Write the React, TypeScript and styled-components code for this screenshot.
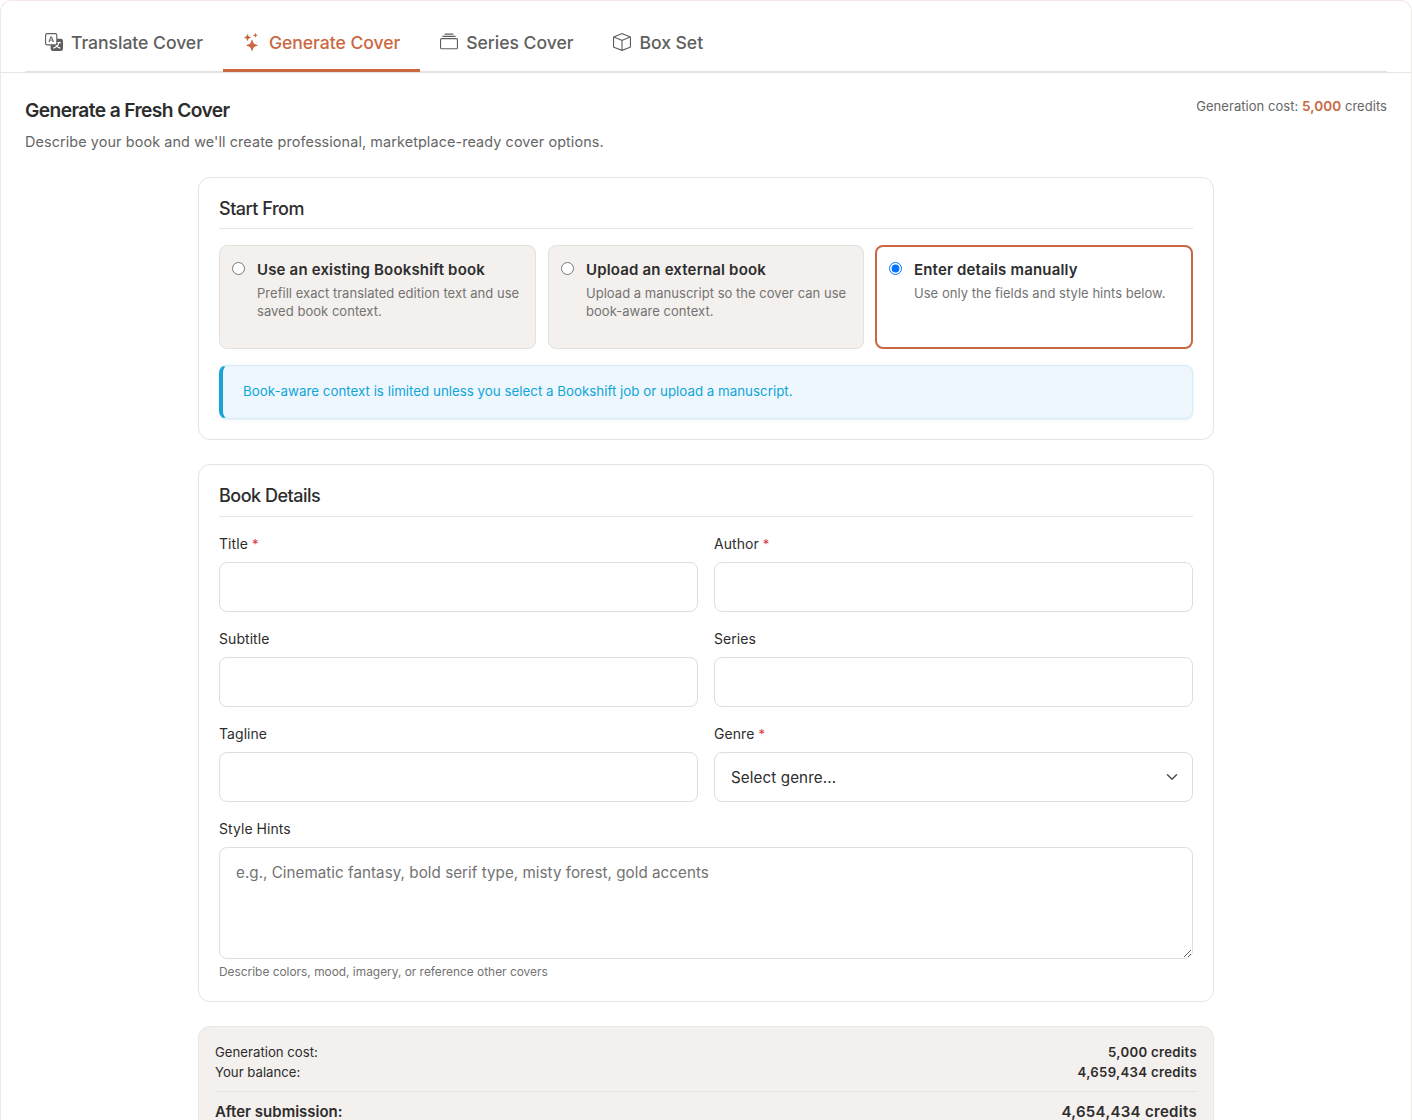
import React from 'react';
import styled, { createGlobalStyle } from 'styled-components';
import { BsTranslate, BsStars, BsCollection, BsBox } from 'react-icons/bs';

const GlobalStyle = createGlobalStyle`
  html, body {
    margin: 0;
    height: 1120px;
    overflow: hidden;
    background: #fff;
    font-family: Inter, "Liberation Sans", sans-serif;
    color: #2d2d2d;
  }
  * { box-sizing: border-box; }
`;

const Frame = styled.div`
  height: 1200px;
  border: 1px solid #eee9e7;
  border-top-color: #f8e6e6;
  border-radius: 12px;
  background: #fff;
`;

const Header = styled.div`
  height: 72px;
  padding: 0 24px;
  border-bottom: 1px solid #e8e6e3;
`;

const Tabs = styled.nav`
  display: flex;
  height: 72px;
  border-bottom: 2px solid #e2e2e0;
`;

const Tab = styled.a<{ $active?: boolean }>`
  display: flex;
  align-items: center;
  gap: 8px;
  height: 71px;
  padding: 22px 20px 8px;
  font-size: 17.6px;
  font-weight: 500;
  letter-spacing: -0.05px;
  color: ${(p) => (p.$active ? '#c96842' : '#5f5f5f')};
  border-bottom: 3px solid ${(p) => (p.$active ? '#c96842' : 'transparent')};
  svg { width: 18px; height: 18px; flex: none; }
`;

const Body = styled.div`
  padding: 23.5px 24px 0;
`;

const TopRow = styled.div`
  display: flex;
  justify-content: space-between;
  align-items: flex-start;
`;

const Title = styled.h1`
  margin: 0;
  font-size: 19.2px;
  line-height: 26px;
  font-weight: 600;
  letter-spacing: -0.6px;
  color: #2d2d2d;
`;

const Lead = styled.p`
  margin: 8.5px 0 0;
  font-size: 14.4px;
  line-height: 22px;
  letter-spacing: 0.1px;
  color: #666;
`;

const Cost = styled.div`
  font-size: 13px;
  line-height: 18px;
  letter-spacing: 0.04px;
  color: #666;
  b { font-weight: 600; color: #c96842; font-size: 13.6px; }
`;

const Column = styled.div`
  width: 1016px;
  margin: 24px auto 0;
  display: flex;
  flex-direction: column;
  gap: 24px;
`;

const Card = styled.section`
  border: 1px solid #e6e4e1;
  border-radius: 12px;
  background: #fff;
  padding: 20px;
`;

const CardTitle = styled.h2<{ $tall?: boolean }>`
  margin: 0;
  height: ${(p) => (p.$tall ? '32px' : '31px')};
  font-size: 18px;
  line-height: 22px;
  font-weight: 500;
  letter-spacing: -0.5px;
  color: #2d2d2d;
  border-bottom: 1px solid #e6e4e1;
`;

const Options = styled.div`
  display: grid;
  grid-template-columns: 317px 316px 317px;
  gap: 12px;
  margin-top: 16px;
`;

const Option = styled.label<{ $selected?: boolean }>`
  display: flex;
  gap: 12px;
  height: 104px;
  margin-left: ${(p) => (p.$selected ? '-1px' : '0')};
  padding: ${(p) => (p.$selected ? '13px 12px' : '14px 12px')};
  border-radius: 8px;
  border: ${(p) => (p.$selected ? '2px solid #c96842' : '1px solid #e3e1de')};
  background: ${(p) => (p.$selected ? '#fff' : '#f3f0ed')};
`;

const Radio = styled.input`
  flex: none;
  width: 13px;
  height: 13px;
  margin: 2px 0 0;
  accent-color: #0075ff;
`;

const OptionTitle = styled.div`
  font-size: 15px;
  line-height: 20px;
  font-weight: 600;
  letter-spacing: 0.17px;
  color: #2d2d2d;
`;

const OptionText = styled.div`
  margin-top: 4px;
  font-size: 13px;
  line-height: 18px;
  letter-spacing: 0.03px;
  color: #737373;
`;

const Notice = styled.div`
  display: flex;
  align-items: center;
  height: 54px;
  margin-top: 16px;
  padding: 0 0 2px 20px;
  font-size: 13.3px;
  letter-spacing: 0.02px;
  color: #0ea5d9;
  background: #eef7fd;
  border: 1px solid #d6ebf8;
  border-left: 4px solid #1ba3d6;
  border-radius: 8px;
  box-shadow: 0 1px 3px rgba(20, 120, 180, 0.12);
`;

const FieldGrid = styled.div`
  display: grid;
  grid-template-columns: 1fr 1fr;
  column-gap: 16px;
  row-gap: 16px;
  margin-top: 16px;
`;

const Field = styled.div<{ $wide?: boolean }>`
  grid-column: ${(p) => (p.$wide ? '1 / -1' : 'auto')};
  min-width: 0;
`;

const Label = styled.label`
  display: block;
  height: 21px;
  margin-bottom: 8px;
  font-size: 14px;
  line-height: 21px;
  font-weight: 400;
  letter-spacing: 0.06px;
  color: #2d2d2d;
`;

const Required = styled.span`
  margin-left: 4px;
  color: #dc3545;
  font-size: 13px;
`;

const Input = styled.input`
  display: block;
  width: 100%;
  height: 50px;
  border: 1px solid #e0deda;
  border-radius: 8px;
  background: #fff;
`;

const Select = styled.div`
  display: flex;
  align-items: center;
  justify-content: space-between;
  height: 50px;
  padding: 0 14px 0 16px;
  border: 1px solid #e0deda;
  border-radius: 8px;
  font-size: 15.2px;
  letter-spacing: 0.1px;
  color: #2d2d2d;
`;

const Textarea = styled.textarea`
  display: block;
  width: 100%;
  height: 112px;
  padding: 13px 16px;
  border: 1px solid #e0deda;
  border-radius: 8px;
  font: inherit;
  font-size: 15.2px;
  line-height: 24px;
  letter-spacing: 0.03px;
  color: #2d2d2d;
  &::placeholder { color: #737373; opacity: 1; }
`;

const Hint = styled.div`
  margin-top: 4px;
  font-size: 11.9px;
  line-height: 18px;
  color: #737373;
`;

const Summary = styled.section`
  padding: 15px 16px;
  background: #f3f0ed;
  border: 1px solid #e9e7e4;
  border-radius: 12px;
`;

const SummaryRow = styled.div<{ $total?: boolean }>`
  display: flex;
  justify-content: space-between;
  font-size: ${(p) => (p.$total ? '15px' : '13.2px')};
  line-height: 20px;
  color: #2d2d2d;
  font-weight: ${(p) => (p.$total ? 600 : 400)};
  b { font-weight: 600; letter-spacing: ${(p) => (p.$total ? '0.3px' : '0.3px')}; }
`;

const SummaryRule = styled.hr`
  margin: 9px 0 10px;
  border: 0;
  border-top: 1px solid #e6e4e1;
`;

const tabs = [
  { label: 'Translate Cover', Icon: BsTranslate },
  { label: 'Generate Cover', Icon: BsStars, active: true },
  { label: 'Series Cover', Icon: BsCollection },
  { label: 'Box Set', Icon: BsBox },
];

const options = [
  {
    title: 'Use an existing Bookshift book',
    text: 'Prefill exact translated edition text and use saved book context.',
  },
  {
    title: 'Upload an external book',
    text: 'Upload a manuscript so the cover can use book-aware context.',
  },
  {
    title: 'Enter details manually',
    text: 'Use only the fields and style hints below.',
    selected: true,
  },
];

const Chevron = () => (
  <svg width="12" height="12" viewBox="0 0 16 16" fill="none" stroke="#4f4f4f" strokeWidth="2" strokeLinecap="round" strokeLinejoin="round">
    <path d="M2 5l6 6 6-6" />
  </svg>
);

export default function App() {
  return (
    <>
      <GlobalStyle />
      <Frame>
        <Header>
          <Tabs>
            {tabs.map(({ label, Icon, active }) => (
              <Tab key={label} $active={active}>
                <Icon />
                {label}
              </Tab>
            ))}
          </Tabs>
        </Header>
        <Body>
          <TopRow>
            <div>
              <Title>Generate a Fresh Cover</Title>
              <Lead>Describe your book and we'll create professional, marketplace-ready cover options.</Lead>
            </div>
            <Cost>
              Generation cost: <b>5,000</b> credits
            </Cost>
          </TopRow>
          <Column>
            <Card>
              <CardTitle>Start From</CardTitle>
              <Options>
                {options.map((o) => (
                  <Option key={o.title} $selected={o.selected}>
                    <Radio type="radio" name="source" defaultChecked={o.selected} />
                    <div>
                      <OptionTitle>{o.title}</OptionTitle>
                      <OptionText>{o.text}</OptionText>
                    </div>
                  </Option>
                ))}
              </Options>
              <Notice>Book-aware context is limited unless you select a Bookshift job or upload a manuscript.</Notice>
            </Card>
            <Card>
              <CardTitle $tall>Book Details</CardTitle>
              <FieldGrid>
                <Field>
                  <Label>Title<Required>*</Required></Label>
                  <Input />
                </Field>
                <Field>
                  <Label>Author<Required>*</Required></Label>
                  <Input />
                </Field>
                <Field>
                  <Label>Subtitle</Label>
                  <Input />
                </Field>
                <Field>
                  <Label>Series</Label>
                  <Input />
                </Field>
                <Field>
                  <Label>Tagline</Label>
                  <Input />
                </Field>
                <Field>
                  <Label>Genre<Required>*</Required></Label>
                  <Select>
                    Select genre...
                    <Chevron />
                  </Select>
                </Field>
                <Field $wide>
                  <Label>Style Hints</Label>
                  <Textarea placeholder="e.g., Cinematic fantasy, bold serif type, misty forest, gold accents" />
                  <Hint>Describe colors, mood, imagery, or reference other covers</Hint>
                </Field>
              </FieldGrid>
            </Card>
            <Summary>
              <SummaryRow>
                <span>Generation cost:</span>
                <b>5,000 credits</b>
              </SummaryRow>
              <SummaryRow>
                <span>Your balance:</span>
                <b>4,659,434 credits</b>
              </SummaryRow>
              <SummaryRule />
              <SummaryRow $total>
                <span>After submission:</span>
                <b>4,654,434 credits</b>
              </SummaryRow>
            </Summary>
          </Column>
        </Body>
      </Frame>
    </>
  );
}
